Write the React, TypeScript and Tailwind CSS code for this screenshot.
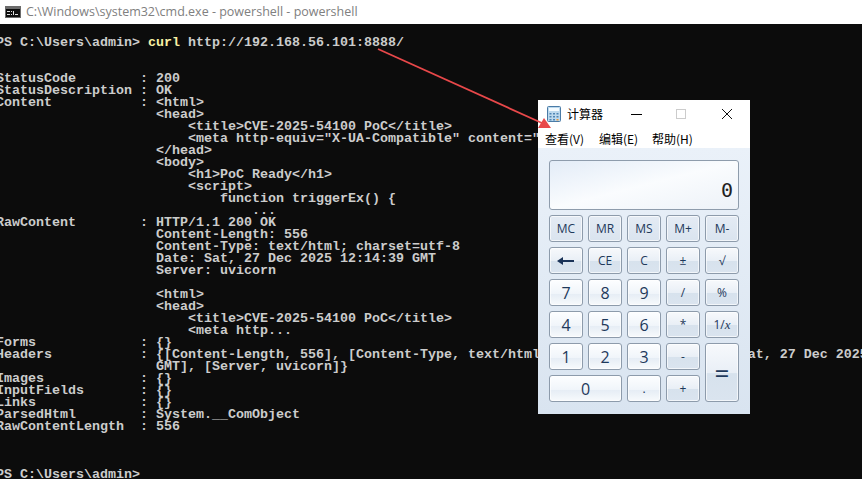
import type { ReactNode } from "react";

const termLines: string[] = [
  "PS C:\\Users\\admin> ",
  "",
  "",
  "StatusCode        : 200",
  "StatusDescription : OK",
  "Content           : <html>",
  "                    <head>",
  "                        <title>CVE-2025-54100 PoC</title>",
  '                        <meta http-equiv="X-UA-Compatible" content="IE=edge">',
  "                    </head>",
  "                    <body>",
  "                        <h1>PoC Ready</h1>",
  "                        <script>",
  "                            function triggerEx() {",
  "                                ...",
  "RawContent        : HTTP/1.1 200 OK",
  "                    Content-Length: 556",
  "                    Content-Type: text/html; charset=utf-8",
  "                    Date: Sat, 27 Dec 2025 12:14:39 GMT",
  "                    Server: uvicorn",
  "",
  "                    <html>",
  "                    <head>",
  "                        <title>CVE-2025-54100 PoC</title>",
  "                        <meta http...",
  "Forms             : {}",
  "Headers           : {[Content-Length, 556], [Content-Type, text/html; charset=utf-8], [Date, Sat, 27 Dec 2025 12:14:39",
  "                    GMT], [Server, uvicorn]}",
  "Images            : {}",
  "InputFields       : {}",
  "Links             : {}",
  "ParsedHtml        : System.__ComObject",
  "RawContentLength  : 556",
  "",
  "",
  "",
  "PS C:\\Users\\admin> ",
];

type Btn = { label: ReactNode; kind: "mem" | "fn" | "num"; className?: string; textClass?: string };

const faces = {
  mem: "bg-[linear-gradient(180deg,#e4ebf4_0%,#dae4ef_100%)]",
  fn: "bg-[linear-gradient(180deg,#f7f9fc_0%,#e9eff6_50%,#d7e2ed_52%,#dae4ef_100%)]",
  num: "bg-[linear-gradient(180deg,#fdfeff_0%,#f0f5fa_55%,#e6edf5_57%,#f7fafc_100%)]",
};

const digit = "text-[16px]";

const buttons: Btn[] = [
  { label: "MC", kind: "mem" },
  { label: "MR", kind: "mem" },
  { label: "MS", kind: "mem" },
  { label: "M+", kind: "mem" },
  { label: "M-", kind: "mem" },
  {
    label: (
      <svg width="18" height="8" viewBox="0 0 18 8">
        <path d="M5 4h12" stroke="#1a3358" strokeWidth="2" />
        <path d="M0 4l6-4v8z" fill="#1a3358" />
      </svg>
    ),
    kind: "fn",
  },
  { label: "CE", kind: "fn" },
  { label: "C", kind: "fn" },
  { label: "±", kind: "fn" },
  { label: "√", kind: "fn" },
  { label: "7", kind: "num", textClass: digit },
  { label: "8", kind: "num", textClass: digit },
  { label: "9", kind: "num", textClass: digit },
  { label: "/", kind: "fn" },
  { label: "%", kind: "fn" },
  { label: "4", kind: "num", textClass: digit },
  { label: "5", kind: "num", textClass: digit },
  { label: "6", kind: "num", textClass: digit },
  { label: "*", kind: "fn" },
  {
    label: (
      <>
        1/<i className="font-['Liberation_Serif',serif] text-[13px]">x</i>
      </>
    ),
    kind: "fn",
  },
  { label: "1", kind: "num", textClass: digit },
  { label: "2", kind: "num", textClass: digit },
  { label: "3", kind: "num", textClass: digit },
  { label: "-", kind: "fn" },
  { label: "=", kind: "fn", className: "row-span-2", textClass: "text-[26px]" },
  { label: "0", kind: "num", className: "col-span-2", textClass: digit },
  { label: ".", kind: "num" },
  { label: "+", kind: "fn" },
];

const CalcButton = ({ btn }: { btn: Btn }) => (
  <div
    className={`flex items-center justify-center rounded-[3px] border border-[#8d9bab] text-[12px] leading-none text-[#1e395b] shadow-[inset_0_0_0_1px_rgba(255,255,255,0.65)] ${faces[btn.kind]} ${btn.className ?? ""} ${btn.textClass ?? ""}`}
  >
    {btn.label}
  </div>
);

const CalcWindow = () => (
  <div
    className="absolute left-[538px] top-[100px] flex h-[314px] w-[212px] flex-col bg-[#d9e4f0]"
    style={{ fontFamily: '"Open Sans", "Noto Sans CJK SC", sans-serif' }}
  >
    <div className="flex h-[28px] items-center bg-white pl-[9px]">
      <svg width="14" height="16" viewBox="0 0 14 16" className="mr-[6px]">
        <rect x="0.5" y="0.5" width="13" height="15" rx="1" fill="#bcd9ee" stroke="#4a7ba6" />
        <rect x="2" y="2" width="10" height="3" fill="#f4fbff" />
        <path d="M2.5 7h2v1.5h-2zM6 7h2v1.5H6zM9.500 7h2v1.500h-2zM2.500 10h2v1.500h-2zM6 10h2v1.500H6zM9.500 10h2v1.500h-2zM2.500 13h2v1.500h-2zM6 13h2v1.500H6z" fill="#4f86b3" />
        <rect x="9.5" y="13" width="2" height="1.5" fill="#e8963a" />
      </svg>
      <span className="w-[64px] text-[12px] text-black" style={{ fontFamily: '"Noto Sans CJK SC", sans-serif' }}>
        计算器
      </span>
      <div className="h-px w-[11px] bg-black" />
      <div className="ml-[34px] h-[10px] w-[10px] border border-[#cccccc]" />
      <svg width="12" height="12" viewBox="0 0 12 12" className="ml-[35px]">
        <path d="M1 1l10 10M11 1L1 11" stroke="#111" strokeWidth="1" fill="none" />
      </svg>
    </div>
    <div className="flex h-[20px] items-center bg-white pl-[7px] pt-px text-[12px] text-black" style={{ fontFamily: '"Noto Sans CJK SC", sans-serif' }}>
      <span className="w-[54px]">查看(V)</span>
      <span className="w-[53px]">编辑(E)</span>
      <span>帮助(H)</span>
    </div>
    <div className="flex flex-1 flex-col bg-gradient-to-b from-[#eaf1f9] to-[#d9e4f0] px-[11px] pt-[12px]">
      <div
        className="flex h-[50px] items-end justify-end rounded-[3px] border border-[#8e9cac] bg-gradient-to-br from-[#e3ecf7] via-[#fafcfe] to-[#edf2f8] pb-[9px] pr-[5px] text-[20px] leading-none text-[#222]"
        style={{ fontFamily: '"DejaVu Sans Mono", monospace' }}
      >
        0
      </div>
      <div className="mt-[5px] grid auto-rows-[27px] grid-cols-[repeat(5,34px)] gap-[5px]">
        {buttons.map((b, i) => (
          <CalcButton key={i} btn={b} />
        ))}
      </div>
    </div>
  </div>
);

export default function App() {
  return (
    <div className="relative h-[479px] w-[862px] overflow-hidden bg-[#0c0c0c]">
      <div className="flex h-[24px] items-center bg-white pl-[5px]">
        <svg width="16" height="12" viewBox="0 0 16 12" className="mr-[5px]">
          <rect x="0" y="0" width="16" height="12" fill="#6b6b6b" />
          <rect x="1" y="3" width="14" height="8" fill="#0c0c0c" />
          <path d="M2 5h3v1H2zM2 8h3v1H2zM6 5h1v1H6zM6 8h1v1H6zM8 5h1v4H8zM10 8h3v1h-3z" fill="#e0e0e0" />
        </svg>
        <span className="text-[12.5px] text-[#808080]" style={{ fontFamily: '"Open Sans", sans-serif' }}>
          C:\Windows\system32\cmd.exe - powershell - powershell
        </span>
      </div>
      <div
        className="ml-[-4px] whitespace-pre pt-[13px] text-[13.33px] font-bold leading-[12px] text-[#cccccc]"
        style={{ fontFamily: '"Liberation Mono", monospace' }}
      >
        {termLines.map((line, i) => (
          <div key={i} className="h-[12px]">
            {line}
            {i === 0 && (
              <>
                <span className="text-[#f9f1a5]">curl</span> http://192.168.56.101:8888/
              </>
            )}
          </div>
        ))}
      </div>
      <CalcWindow />
      <svg width="862" height="479" className="pointer-events-none absolute left-0 top-0">
        <line x1="378" y1="49" x2="543" y2="123.500" stroke="#e8484a" strokeWidth="1.800" />
        <polygon points="551,128 538,128 544,118" fill="#e8484a" />
      </svg>
    </div>
  );
}
